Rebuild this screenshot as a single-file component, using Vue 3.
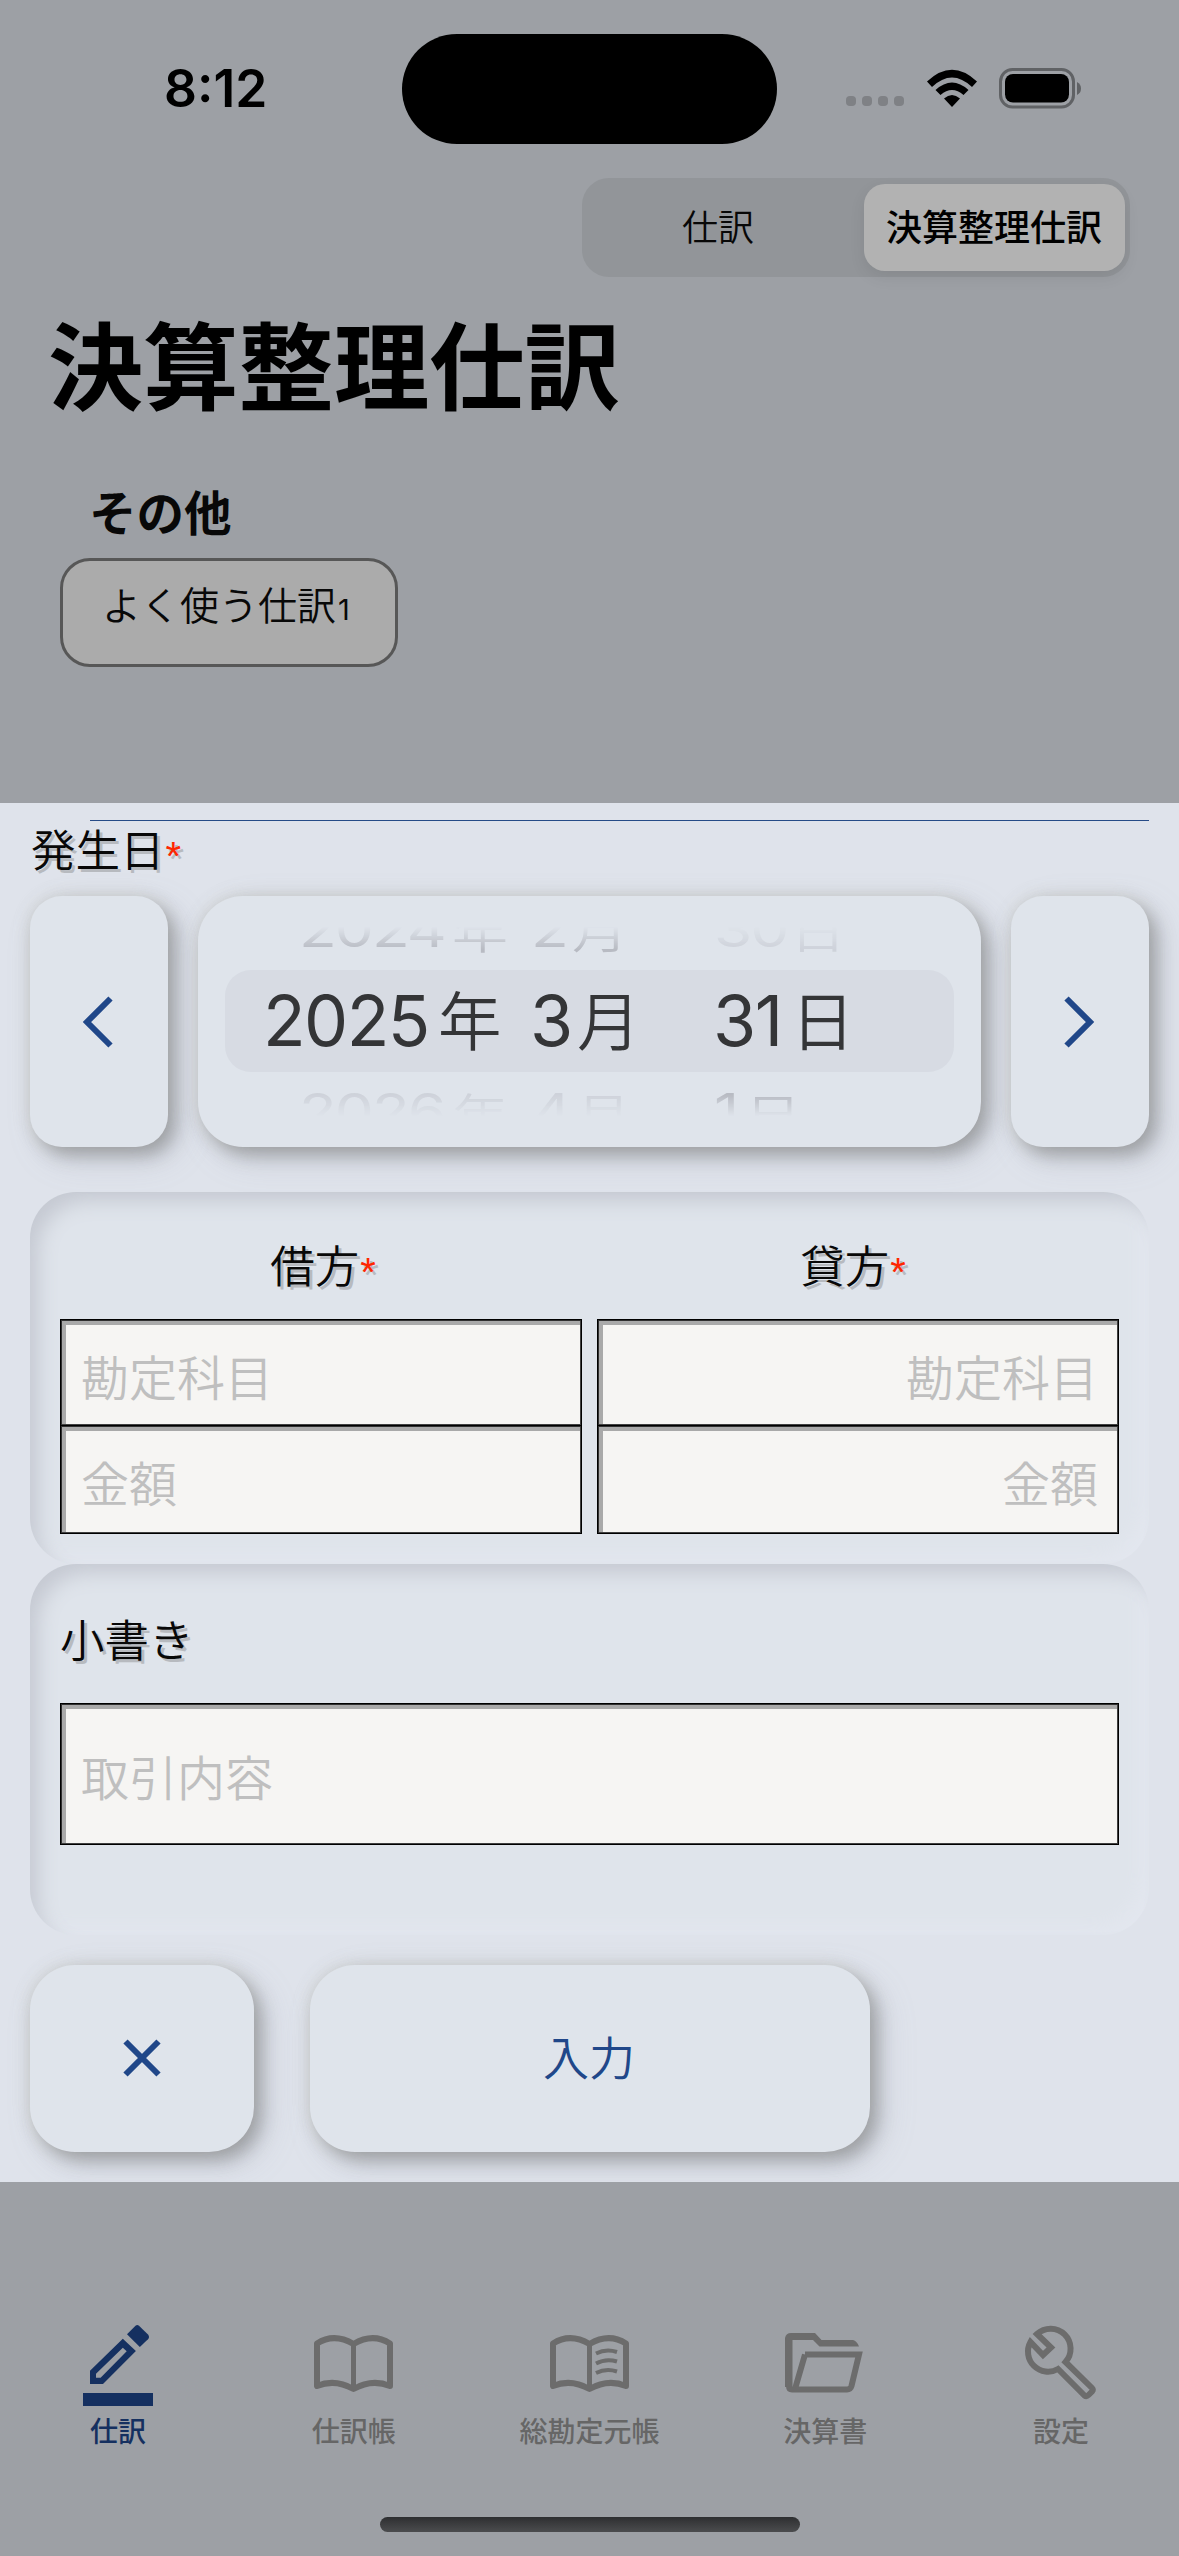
<script setup>
const tabs = [
  { id: 'pencil', label: '仕訳', active: true },
  { id: 'book', label: '仕訳帳' },
  { id: 'ledger', label: '総勘定元帳' },
  { id: 'folder', label: '決算書' },
  { id: 'wrench', label: '設定' }
]
const sides = [
  { title: '借方', align: 'left' },
  { title: '貸方', align: 'right' }
]
</script>

<template>
  <div class="screen" lang="ja">
    <header class="top">
      <div class="status">
        <span class="time">8:12</span>
        <span class="island"></span>
        <span class="dots"><i v-for="n in 4" :key="n"></i></span>
        <svg class="wifi" width="52" height="38" viewBox="0 0 52 38">
          <path d="M1 12.5 Q26 -11 51 12.5 L46 18 Q26 -1 6 18Z" />
          <path d="M9.5 21 Q26 6 42.5 21 L37.5 26 Q26 16 14.5 26Z" />
          <path d="M18 29.5 Q26 22.500 34 29.500 L26 38Z" />
        </svg>
        <svg class="battery" width="84" height="41" viewBox="0 0 84 41">
          <rect x="1.500" y="1.500" width="73" height="37.500" rx="12" fill="none" stroke="#606265" stroke-width="3" />
          <rect x="6" y="6" width="64" height="28.500" rx="8" fill="#000" />
          <path d="M78 14 Q82 16 82 20.500 Q82 25 78 27Z" fill="#606265" />
        </svg>
      </div>
      <div class="segment">
        <span class="seg">仕訳</span>
        <span class="seg on">決算整理仕訳</span>
      </div>
      <h1>決算整理仕訳</h1>
      <h2>その他</h2>
      <div class="chip">よく使う仕訳<small>1</small></div>
    </header>

    <main class="sheet">
      <div class="rule"></div>
      <div class="label date-label">発生日<b>*</b></div>
      <div class="date-row">
        <button class="raised arrow">
          <svg width="32" height="52" viewBox="0 0 32 52"><path d="M28.500 2.500 L5 26 L28.500 49.500" /></svg>
        </button>
        <div class="raised picker">
          <div class="row faded above">
            <span class="y"><i>2024</i>年</span><span class="m"><i>2</i>月</span><span class="d dim"><i>30</i>日</span>
          </div>
          <div class="row current">
            <span class="y"><i>2025</i>年</span><span class="m"><i>3</i>月</span><span class="d"><i>31</i>日</span>
          </div>
          <div class="row faded below">
            <span class="y dim"><i>2026</i>年</span><span class="m dim"><i>4</i>月</span><span class="d"><i>1</i>日</span>
          </div>
        </div>
        <button class="raised arrow">
          <svg width="32" height="52" viewBox="0 0 32 52"><path d="M3.500 2.500 L27 26 L3.500 49.500" /></svg>
        </button>
      </div>

      <section class="sunken accounts">
        <div v-for="s in sides" :key="s.title" class="side" :class="s.align">
          <div class="label">{{ s.title }}<b>*</b></div>
          <div class="field">勘定科目</div>
          <div class="field amount">金額</div>
        </div>
      </section>

      <section class="sunken memo">
        <div class="label">小書き</div>
        <div class="field">取引内容</div>
      </section>

      <div class="actions">
        <button class="raised cancel">
          <svg width="38" height="38" viewBox="0 0 38 38"><path d="M2.500 2.500 L35.500 35.500 M35.500 2.500 L2.500 35.500" /></svg>
        </button>
        <button class="raised submit">入力</button>
      </div>
    </main>

    <nav class="tabbar">
      <div class="tabs">
        <div v-for="t in tabs" :key="t.id" class="tab" :class="{ active: t.active }">
          <svg v-if="t.id === 'pencil'" width="70" height="88" viewBox="0 0 70 88">
            <path fill="currentColor" d="M44 13.300 L52.500 4.800 Q54.300 3.200 56 4.800 L65 13.500 Q67 16 65 18.300 L56.800 26Z" />
            <path fill="currentColor" fill-rule="evenodd" d="M7 63 V49.700 L39.800 17.700 L52.900 30 L20 63Z M13 56.700 H17.600 L43.700 30.300 L39.800 26.700 L13 52.700Z" />
            <rect x="0" y="72" width="70" height="13" fill="currentColor" />
          </svg>
          <svg v-else-if="t.id === 'book' || t.id === 'ledger'" width="79" height="88" viewBox="0 0 79 88" class="line">
            <g transform="translate(0 14)">
              <path d="M3 51 V8.500 Q20 -2.500 39.500 9 Q59 -2.500 76 8.500 V51 Q58 43.500 39.500 54 Q21 43.500 3 51Z" />
              <path d="M39.500 9 V54" stroke-width="5" />
              <g v-if="t.id === 'ledger'" stroke-width="4">
                <path d="M46 18.500 Q56 13.500 67 17" />
                <path d="M46 28.500 Q56 23 67 26.500" />
                <path d="M46 38 Q56 33 67 36.500" />
              </g>
            </g>
          </svg>
          <svg v-else-if="t.id === 'folder'" width="80" height="88" viewBox="0 0 80 88" class="line folder">
            <g transform="translate(0 11)">
              <path fill="currentColor" stroke="none" d="M0 6 Q1 1 6 1 H30 L36.500 8 H68 Q72 9 74 14.500 H34.500 L28 8 H7.500 V55 H0Z" />
              <path d="M20 22.500 H74 L66.500 54 Q65.500 57.500 62 57.500 H7 Q4 57.500 4 54 M20 22.500 L10 57" />
            </g>
          </svg>
          <svg v-else width="74" height="88" viewBox="0 0 74 88" class="line wrench">
            <g transform="translate(0 6.500)">
              <path d="M13 6.500 L27 20 L19 27.500 L6.500 14.500 A20 20 0 0 0 34 41.500 L60.500 68 Q62.500 69.500 64.500 67.500 L68 64 Q69.500 62 68 60.500 L41.500 34.500 A20 20 0 0 0 13 6.500Z" />
            </g>
          </svg>
          <span>{{ t.label }}</span>
        </div>
      </div>
      <div class="home"></div>
    </nav>
  </div>
</template>

<style>
body { background: #9da0a5; }
</style>

<style scoped>
* { box-sizing: border-box; }
.screen {
  width: 1179px;
  height: 2556px;
  display: flex;
  flex-direction: column;
  overflow: hidden;
  background: #9da0a5;
  color: #080808;
  font-family: "Noto Sans CJK JP", sans-serif;
}
button { border: 0; padding: 0; font: inherit; }
i { font-style: normal; }

.top { height: 803px; flex: none; }
.status {
  height: 178px;
  display: flex;
  align-items: flex-start;
}
.time {
  width: 402px;
  padding-left: 164px;
  padding-top: 57px;
  font: 600 51.500px/62px Inter, sans-serif;
  color: #000;
}
.island {
  width: 375px;
  height: 110px;
  margin-top: 34px;
  border-radius: 55px;
  background: #000;
}
.dots { display: flex; gap: 6px; margin: 96px 0 0 69px; }
.dots i { width: 10px; height: 10px; border-radius: 4px; background: #7f8185; }
.wifi { margin: 69px 0 0 22px; }
.battery { margin: 68px 0 0 21px; }
.segment {
  display: flex;
  width: 548px;
  height: 99px;
  margin-left: 582px;
  padding: 6px 5px;
  border-radius: 27px;
  background: #929599;
}
.seg { width: 277px; text-align: center; font-size: 36px; font-weight: 350; line-height: 83px; padding-right: 15px; }
.seg.on {
  width: 261px;
  padding: 0 1px 0 0;
  border-radius: 21px;
  background: #b2b2b2;
  font-weight: 500;
  color: #000;
  box-shadow: 0 6px 16px rgba(0, 0, 0, .08);
}
h1 { margin: 36px 0 0 48px; font-size: 95.300px; line-height: 96px; font-weight: 700; color: #000; }
h2 { margin: 72px 0 0 89px; font-size: 47.500px; line-height: 60px; font-weight: 700; }
.chip {
  width: 338px;
  height: 109px;
  margin: 17px 0 0 60px;
  padding-left: 39px;
  border: 3px solid #575757;
  border-radius: 30px;
  background: #ababab;
  font-size: 39px;
  font-weight: 350;
  line-height: 85px;
}
small { font: 400 29px Inter, sans-serif; margin-left: 2px; }

.sheet {
  height: 1379px;
  flex: none;
  overflow: hidden;
  background: #dfe3eb;
}
.rule { height: 1px; margin: 17px 30px 0 90px; background: #264b87; }
.label {
  font-size: 44.500px;
  line-height: 54px;
  font-weight: 350;
  text-shadow: 3px 3px 0 #b7babf;
}
.label b { font: 400 40px/32px "Liberation Sans", sans-serif; color: #ff2600; margin-left: 1px; position: relative; top: 3px; }
.date-label { height: 75px; padding: 0 31px; }
.date-row { display: flex; gap: 30px; padding: 0 30px; height: 251px; }
.raised {
  background: #dfe4eb;
  border-radius: 45px;
  color: #204789;
  box-shadow: 8px 9px 18px rgba(80, 80, 75, .38), -1px -1px 16px rgba(190, 190, 175, .32), 12px 12px 36px rgba(140, 145, 165, .18);
}
.raised svg path { fill: none; stroke: #204789; stroke-width: 6; }
.arrow { width: 138px; border-radius: 32px; display: grid; place-items: center; }
.arrow svg { margin-right: 2px; }
.picker { width: 783px; padding: 31px 27px 0; color: #343537; }
.row { display: grid; grid-template-columns: 310px 182px 1fr; overflow: hidden; }
.row span { display: flex; font-weight: 350; }
.row i { flex: none; font-family: Inter, sans-serif; font-weight: 400; }
.current {
  height: 102px;
  border-radius: 26px;
  background: #d7dbe3;
  font-size: 63.500px;
  line-height: 94px;
}
.current i { font-size: 70px; line-height: 101px; letter-spacing: -1.600px; }
.current .y { padding-left: 38px; }
.current .y i { width: 175px; }
.current .m { margin-left: -5px; }
.current .m i { width: 47px; }
.current .d { margin-left: -4px; }
.current .d i { width: 78px; }
.faded { font-size: 56px; height: 43px; color: #b8bbc3; }
.faded i { font-size: 62px; letter-spacing: -2px; }
.faded span { height: 62px; line-height: 62px; transform: scaleY(.8); transform-origin: 0 0; padding-left: 0; }
.faded .y { padding-left: 74px; }
.faded .y i { width: 153px; }
.faded .m { margin-left: -4px; }
.faded .m i { width: 41px; }
.faded .d { margin-left: -3px; }
.faded .d i { width: 76px; }
.above { -webkit-mask-image: linear-gradient(transparent 0, #000 22px); mask-image: linear-gradient(transparent 0, #000 22px); }
.above span { margin-top: -22px; }
.below { margin-top: 17px; height: 27px; -webkit-mask-image: linear-gradient(#000 6px, transparent 27px); mask-image: linear-gradient(#000 6px, transparent 27px); }
.below span { margin-top: -2px; }
.below .m i { width: 43px; }
.below .m { padding-left: 1px; }
.below .d i { width: 31px; }
.dim { opacity: .42; }

.sunken {
  margin: 0 30px;
  padding: 0 30px;
  border-radius: 46px;
  background: #dfe4eb;
  box-shadow: inset 12px 13px 20px -4px #c5c9d2, inset -12px -12px 18px -4px #e3e7ef;
}
.accounts { display: flex; gap: 15px; height: 372px; margin-top: 45px; padding-top: 45px; }
.side { width: 522px; }
.side .label { text-align: center; height: 82px; padding-left: 4px; }
.right .label { padding: 0 10px 0 0; }
.field {
  height: 107px;
  padding: 0 20px;
  border: 1px solid #000;
  background: #f6f5f3;
  box-shadow: inset 1px 1px 0 #303030, inset -1px -1px 0 #404040, inset 5px 5px 0 #a9a9a9;
  color: #bfbfbf;
  font-size: 48px;
  font-weight: 350;
  line-height: 111px;
}
.right .field { text-align: right; padding-right: 20px; }
.field.amount { margin-top: -1px; height: 109px; }
.memo { height: 371px; padding-top: 47px; }
.memo .label { height: 92px; }
.memo .field { height: 142px; line-height: 143px; }

.actions { display: flex; gap: 56px; padding: 30px 30px 0; }
.cancel { width: 224px; height: 187px; display: grid; place-items: center; }
.cancel svg { margin-bottom: 2px; }
.submit { width: 560px; height: 187px; font-size: 46px; font-weight: 350; padding: 0 2px 7px 0; }

.tabbar { flex: 1; padding-top: 139px; }
.tabs { display: flex; }
.tab {
  flex: 1;
  display: flex;
  flex-direction: column;
  align-items: center;
  color: #666;
  font-size: 28px;
  font-weight: 500;
}
.tab span { line-height: 36px; margin: 3px 0 0; }
.active { color: #153060; }
.line { fill: none; stroke: #6c6c6c; stroke-width: 6; color: #6c6c6c; stroke-linejoin: round; }
.folder, .wrench { stroke-linejoin: miter; }
.folder { margin-right: 1px; }
.home {
  width: 420px;
  height: 15px;
  margin: 69px auto 0;
  border-radius: 8px;
  background: linear-gradient(#2e2f31, #4b4c4e);
}
</style>
